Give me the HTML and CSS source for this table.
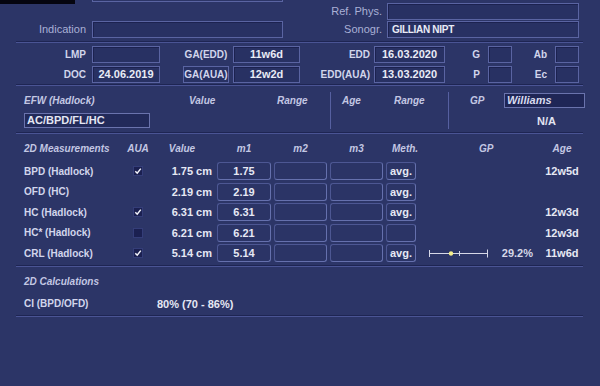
FILE: index.html
```html
<!DOCTYPE html>
<html>
<head>
<meta charset="utf-8">
<link rel="stylesheet" href="styles.css">
</head>
<body>
<div class="screen">
  <div class="row r0">
    <div class="blackbar"></div>
    <div class="stub"></div>
    <div class="lbl lbl-right">Ref. Phys.</div>
    <div class="field f-wide"></div>
  </div>
  <div class="row r1">
    <div class="lbl lbl-ind">Indication</div>
    <div class="field f-ind"></div>
    <div class="lbl lbl-right">Sonogr.</div>
    <div class="field f-wide f-text"><span class="name">GILLIAN NIPT</span></div>
  </div>
  <div class="sep"></div>

  <div class="row drow">
    <div class="dl c-a">LMP</div><div class="field f-date"></div>
    <div class="dl c-b">GA(EDD)</div><div class="field f-ga">11w6d</div>
    <div class="dl c-c">EDD</div><div class="field f-edd">16.03.2020</div>
    <div class="dl c-d">G</div><div class="field f-sm"></div>
    <div class="dl c-e">Ab</div><div class="field f-sm2"></div>
  </div>
  <div class="row drow">
    <div class="dl c-a">DOC</div><div class="field f-date">24.06.2019</div>
    <div class="dl c-b boxed">GA(AUA)</div><div class="field f-ga">12w2d</div>
    <div class="dl c-c">EDD(AUA)</div><div class="field f-edd">13.03.2020</div>
    <div class="dl c-d">P</div><div class="field f-sm"></div>
    <div class="dl c-e">Ec</div><div class="field f-sm2"></div>
  </div>
  <div class="sep sep-tight"></div>

  <div class="efw">
    <div class="efw-col col1">
      <div class="erow">
        <span class="hd e-name">EFW (Hadlock)</span>
        <span class="hd e-val">Value</span>
        <span class="hd">Range</span>
      </div>
      <div class="erow erow2">
        <div class="efield">AC/BPD/FL/HC</div>
      </div>
    </div>
    <div class="efw-col col2">
      <div class="erow">
        <span class="hd e-age">Age</span>
        <span class="hd">Range</span>
      </div>
      <div class="erow erow2"></div>
    </div>
    <div class="efw-col col3">
      <div class="erow">
        <span class="hd e-gp">GP</span>
        <div class="gpfield">Williams</div>
      </div>
      <div class="erow erow2">
        <span class="na">N/A</span>
      </div>
    </div>
  </div>
  <div class="sep sep-efw"></div>

  <div class="mtable">
    <div class="mrow mhead">
      <div class="c1 hd">2D Measurements</div>
      <div class="c2 hd">AUA</div>
      <div class="c3 hd ctr">Value</div>
      <div class="c4 hd ctr">m1</div>
      <div class="c5 hd ctr">m2</div>
      <div class="c6 hd ctr">m3</div>
      <div class="c7 hd ctr meth-h">Meth.</div>
      <div class="c8 hd gp-h">GP</div>
      <div class="c9 hd ctr">Age</div>
    </div>

    <div class="mrow">
      <div class="c1 rl">BPD (Hadlock)</div>
      <div class="c2"><span class="cb"><svg viewBox="0 0 10 10" width="10" height="10"><polyline points="2.3,5.2 4.2,7.2 7.8,2.6" fill="none" stroke="#f2f3fa" stroke-width="1.5"/></svg></span></div>
      <div class="c3 num">1.75 cm</div>
      <div class="c4 mf">1.75</div>
      <div class="c5 mf"></div>
      <div class="c6 mf"></div>
      <div class="c7 mf">avg.</div>
      <div class="c8"></div>
      <div class="c9 num ctr">12w5d</div>
    </div>
    <div class="mrow">
      <div class="c1 rl">OFD (HC)</div>
      <div class="c2"></div>
      <div class="c3 num">2.19 cm</div>
      <div class="c4 mf">2.19</div>
      <div class="c5 mf"></div>
      <div class="c6 mf"></div>
      <div class="c7 mf">avg.</div>
      <div class="c8"></div>
      <div class="c9 num ctr"></div>
    </div>
    <div class="mrow">
      <div class="c1 rl">HC (Hadlock)</div>
      <div class="c2"><span class="cb"><svg viewBox="0 0 10 10" width="10" height="10"><polyline points="2.3,5.2 4.2,7.2 7.8,2.6" fill="none" stroke="#f2f3fa" stroke-width="1.5"/></svg></span></div>
      <div class="c3 num">6.31 cm</div>
      <div class="c4 mf">6.31</div>
      <div class="c5 mf"></div>
      <div class="c6 mf"></div>
      <div class="c7 mf">avg.</div>
      <div class="c8"></div>
      <div class="c9 num ctr">12w3d</div>
    </div>
    <div class="mrow">
      <div class="c1 rl">HC* (Hadlock)</div>
      <div class="c2"><span class="cb"></span></div>
      <div class="c3 num">6.21 cm</div>
      <div class="c4 mf">6.21</div>
      <div class="c5 mf"></div>
      <div class="c6 mf"></div>
      <div class="c7 mf"></div>
      <div class="c8"></div>
      <div class="c9 num ctr">12w3d</div>
    </div>
    <div class="mrow">
      <div class="c1 rl">CRL (Hadlock)</div>
      <div class="c2"><span class="cb"><svg viewBox="0 0 10 10" width="10" height="10"><polyline points="2.3,5.2 4.2,7.2 7.8,2.6" fill="none" stroke="#f2f3fa" stroke-width="1.5"/></svg></span></div>
      <div class="c3 num">5.14 cm</div>
      <div class="c4 mf">5.14</div>
      <div class="c5 mf"></div>
      <div class="c6 mf"></div>
      <div class="c7 mf">avg.</div>
      <div class="c8 gpcell">
        <svg class="gpbar" viewBox="0 0 78 18" width="78" height="18">
          <line x1="13" y1="9.5" x2="71" y2="9.5" stroke="#d6d8e8" stroke-width="1"/>
          <line x1="13.5" y1="6" x2="13.5" y2="13" stroke="#d6d8e8" stroke-width="1"/>
          <line x1="43.5" y1="7" x2="43.5" y2="12" stroke="#d6d8e8" stroke-width="1"/>
          <line x1="71.5" y1="5.5" x2="71.5" y2="13.5" stroke="#d6d8e8" stroke-width="1"/>
          <circle cx="35" cy="9.5" r="2.2" fill="#f5ef8c"/>
        </svg>
        <span class="pct">29.2%</span>
      </div>
      <div class="c9 num ctr">11w6d</div>
    </div>
  </div>
  <div class="sep sep-m"></div>

  <div class="calc">
    <div class="crow"><span class="hd">2D Calculations</span></div>
    <div class="crow crow2">
      <span class="rl c-lbl">CI (BPD/OFD)</span>
      <span class="num">80% (70 - 86%)</span>
    </div>
  </div>
  <div class="sep sep-c"></div>
</div>
</body>
</html>
```

FILE: styles.css
```css
* { box-sizing: border-box; }
html, body { margin: 0; padding: 0; }
body {
  width: 600px;
  height: 386px;
  overflow: hidden;
  background: #2c3567;
  font-family: "Liberation Sans", Arial, sans-serif;
  color: #d2d5ec;
}
.screen { width: 600px; height: 386px; }

.row { display: flex; align-items: flex-start; }

/* fields */
.field {
  height: 17px;
  border: 1px solid #5a64a2;
  background: #283163;
  box-shadow: inset 1px 1px 0 #1c2250;
  font-weight: bold;
  font-size: 11px;
  color: #e9ebf6;
  line-height: 15px;
  text-align: center;
}

/* top rows */
.r0 { height: 20px; }
.blackbar { width: 75px; height: 4px; background: #050510; }
.stub {
  width: 191px; height: 2px; margin-left: 17px;
  border: 1px solid #5a64a2; border-top: none;
}
.lbl {
  font-size: 11px;
  color: #aab0d6;
  text-align: right;
  height: 17px;
  line-height: 17px;
}
.r0 .lbl, .r0 .field { margin-top: 3px; }
.lbl-right { width: 99px; }
.lbl-ind { width: 86px; }
.f-wide { width: 192px; margin-left: 5px; text-align: left; }
.f-ind { width: 191px; margin-left: 6px; }
.r1 { margin-top: 1px; }
.name { padding-left: 4px; font-size: 10px; letter-spacing: -0.3px; line-height: 15px; }

.sep {
  margin: 3px 17px 0 16px;
  height: 2px;
  border-top: 1px solid #1e2553;
  border-bottom: 1px solid #4a5494;
}
.sep-tight { margin-top: 1px; }

/* date rows */
.drow { margin-top: 3px; }
.dl {
  font-size: 10px;
  font-weight: bold;
  color: #d2d5ec;
  height: 17px;
  line-height: 17px;
  text-align: right;
}
.c-a { width: 86px; }
.f-date { width: 68px; margin-left: 6px; }
.c-b { width: 46px; margin-left: 23px; text-align: center; }
.boxed {
  border: 1px solid #5a64a2;
  background: #283163;
  line-height: 15px;
}
.f-ga { width: 67px; margin-left: 4px; }
.c-c { width: 70px; }
.f-edd { width: 71px; margin-left: 4px; }
.c-d { width: 35px; }
.f-sm { width: 24px; margin-left: 8px; }
.c-e { width: 35px; }
.f-sm2 { width: 24px; margin-left: 8px; }

/* headers */
.hd {
  font-size: 10px;
  font-weight: bold;
  font-style: italic;
  color: #c3c7e3;
}

/* EFW */
.efw { display: flex; margin-top: 6px; height: 37px; }
.efw-col { height: 37px; padding-top: 1px; }
.col1 { width: 330px; padding-left: 24px; }
.col2 { width: 118px; padding-left: 11px; border-left: 1px solid #5660a0; }
.col3 { width: 152px; padding-left: 21px; border-left: 1px solid #5660a0; }
.erow { display: flex; align-items: center; height: 15px; }
.erow2 { margin-top: 5px; }
.e-name { width: 165px; }
.e-val { width: 88px; }
.e-age { width: 52px; }
.e-gp { width: 34px; }
.efield {
  width: 126px; height: 15px;
  border: 1px solid #6a73ad;
  background: #222a5a;
  font-size: 11px; font-weight: bold; color: #e4e6f3;
  line-height: 13px; padding-left: 2px;
}
.gpfield {
  width: 81px; height: 15px;
  border: 1px solid #6a73ad;
  background: #1f2656;
  font-size: 11px; font-weight: bold; font-style: italic; color: #d8dbee;
  line-height: 13px; padding-left: 2px;
}
.na {
  margin-left: 67px;
  font-size: 11px; font-weight: bold; color: #e2e4f2;
}
.sep-efw { margin-top: 3px; }

/* measurements */
.mtable { padding-left: 24px; }
.mrow { display: flex; align-items: center; height: 18px; margin-bottom: 2.5px; }
.mhead { height: 14px; margin-top: 7px; margin-bottom: 7px; }
.c1 { width: 100px; }
.c2 { width: 28px; display: flex; justify-content: center; }
.c3 { width: 60px; text-align: right; }
.c4 { width: 54px; margin-left: 5px; }
.c5 { width: 53px; margin-left: 3px; }
.c6 { width: 53px; margin-left: 3px; }
.c7 { width: 30px; margin-left: 3px; }
.c8 { width: 124px; }
.c9 { width: 44px; }
.ctr { text-align: center; }
.mhead .c3 { text-align: center; }
.meth-h { padding-left: 6px; }
.gp-h { padding-left: 63px; }
.rl { font-size: 10px; font-weight: bold; color: #d2d5ec; }
.num { font-size: 11px; font-weight: bold; color: #e6e8f4; }
.cb {
  width: 10px; height: 10px;
  background: #1b2051;
  border: 1px solid #343d78;
  display: flex; align-items: center; justify-content: center;
}
.cb svg { display: block; flex: none; }
.mf {
  height: 18px;
  border: 1px solid #4d5793;
  border-right-color: #6570ad;
  border-bottom-color: #6570ad;
  border-radius: 3px;
  background: #2b3466;
  font-size: 11px; font-weight: bold; color: #e6e8f4;
  text-align: center;
  line-height: 16px;
}
.gpcell { display: flex; align-items: center; }
.gpbar { display: block; flex: none; }
.pct { flex: 1; text-align: right; padding-right: 7px; font-size: 11px; font-weight: bold; color: #d6d8e8; }
.sep-m { margin-top: 0.5px; }

/* calculations */
.calc { padding-left: 24px; }
.crow { display: flex; align-items: center; height: 14px; margin-top: 8px; }
.c-lbl { width: 133px; }
.sep-c { margin-top: 4px; }
```
